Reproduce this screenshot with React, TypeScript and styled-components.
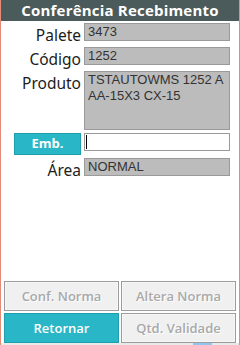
import React from "react";
import styled, { createGlobalStyle } from "styled-components";

const Global = createGlobalStyle`
  html, body { margin: 0; padding: 0; background: #ffffff; }
  * { box-sizing: border-box; }
`;

const Screen = styled.div`
  width: 240px;
  height: 345px;
  display: flex;
  flex-direction: column;
  border-left: 1px solid #e48b79;
  border-right: 1px solid #e48b79;
  background: #ffffff;
  overflow: hidden;
`;

const Header = styled.div`
  height: 21px;
  background: #4b5a5a;
  color: #ffffff;
  font-family: "Open Sans", sans-serif;
  font-weight: 700;
  font-size: 15px;
  line-height: 20px;
  text-align: center;
  letter-spacing: 0.2px;
`;

const Form = styled.div`
  display: flex;
  flex-direction: column;
  padding-top: 2px;
`;

const Row = styled.div<{ $gap: number }>`
  display: grid;
  grid-template-columns: 80px 146px;
  column-gap: 3px;
  align-items: start;
  margin-top: ${(p) => p.$gap}px;
`;

const Label = styled.div`
  height: 18px;
  font-family: "Noto Sans", "Open Sans", sans-serif;
  font-size: 15.5px;
  color: #1c1c1c;
  text-align: right;
  line-height: 18px;
  padding-top: 3px;
  white-space: nowrap;
`;

const Field = styled.div<{ $h: number }>`
  height: ${(p) => p.$h}px;
  background: #bcbcbc;
  border: 1px solid #9a9a9a;
  font-family: "Liberation Sans", Arial, sans-serif;
  font-size: 13px;
  line-height: 16px;
  color: #333333;
  padding: 0 2px 0 3px;
  overflow: hidden;
`;

const TextBox = styled.div`
  height: 18px;
  background: #ffffff;
  border: 1px solid #9a9a9a;
  position: relative;
  &::after {
    content: "";
    position: absolute;
    left: 1px;
    top: 1px;
    width: 1px;
    height: 14px;
    background: #000000;
  }
`;

const ActionWrap = styled.div`
  display: flex;
  justify-content: flex-end;
`;

const SmallButton = styled.div`
  width: 67px;
  height: 22px;
  background: #29b6c6;
  border: 1px solid #1f9fae;
  color: #ffffff;
  font-family: "Open Sans", sans-serif;
  font-weight: 700;
  font-size: 13px;
  line-height: 19px;
  text-align: center;
`;

const Spacer = styled.div`
  flex: 1;
`;

const Buttons = styled.div`
  display: grid;
  grid-template-columns: 115px 115px;
  column-gap: 2px;
  row-gap: 2px;
  padding: 0 0 0 3px;
`;

const Button = styled.div<{ $primary?: boolean }>`
  height: 30px;
  border: ${(p) => (p.$primary ? "1px solid #1f9fae" : "1px solid #9c9c9c")};
  background: ${(p) => (p.$primary ? "#29b6c6" : "#f0f0f0")};
  color: ${(p) => (p.$primary ? "#ffffff" : "#a9a9a9")};
  text-shadow: ${(p) => (p.$primary ? "none" : "1px 1px 0 #ffffff")};
  font-family: "Open Sans", sans-serif;
  font-weight: 600;
  font-size: 13px;
  line-height: 28px;
  text-align: center;
  box-shadow: ${(p) => (p.$primary ? "none" : "inset 0 0 0 1px #f7f7f7")};
`;

const Footer = styled.div`
  height: 2px;
  background: #e9e9e9;
  display: flex;
`;

const Thumb = styled.div`
  width: 19px;
  margin-left: 192px;
  background: #8ec6f0;
`;

export default function App() {
  return (
    <>
      <Global />
      <Screen>
        <Header>Conferência Recebimento</Header>
        <Form>
          <Row $gap={0}>
            <Label>Palete</Label>
            <Field $h={18}>3473</Field>
          </Row>
          <Row $gap={6}>
            <Label>Código</Label>
            <Field $h={18}>1252</Field>
          </Row>
          <Row $gap={6}>
            <Label>Produto</Label>
            <Field $h={59}>TSTAUTOWMS 1252 A AA-15X3 CX-15</Field>
          </Row>
          <Row $gap={3}>
            <ActionWrap>
              <SmallButton>Emb.</SmallButton>
            </ActionWrap>
            <TextBox />
          </Row>
          <Row $gap={3}>
            <Label>Área</Label>
            <Field $h={18}>NORMAL</Field>
          </Row>
        </Form>
        <Spacer />
        <Buttons>
          <Button>Conf. Norma</Button>
          <Button>Altera Norma</Button>
          <Button $primary>Retornar</Button>
          <Button>Qtd. Validade</Button>
        </Buttons>
        <Footer>
          <Thumb />
        </Footer>
      </Screen>
    </>
  );
}
